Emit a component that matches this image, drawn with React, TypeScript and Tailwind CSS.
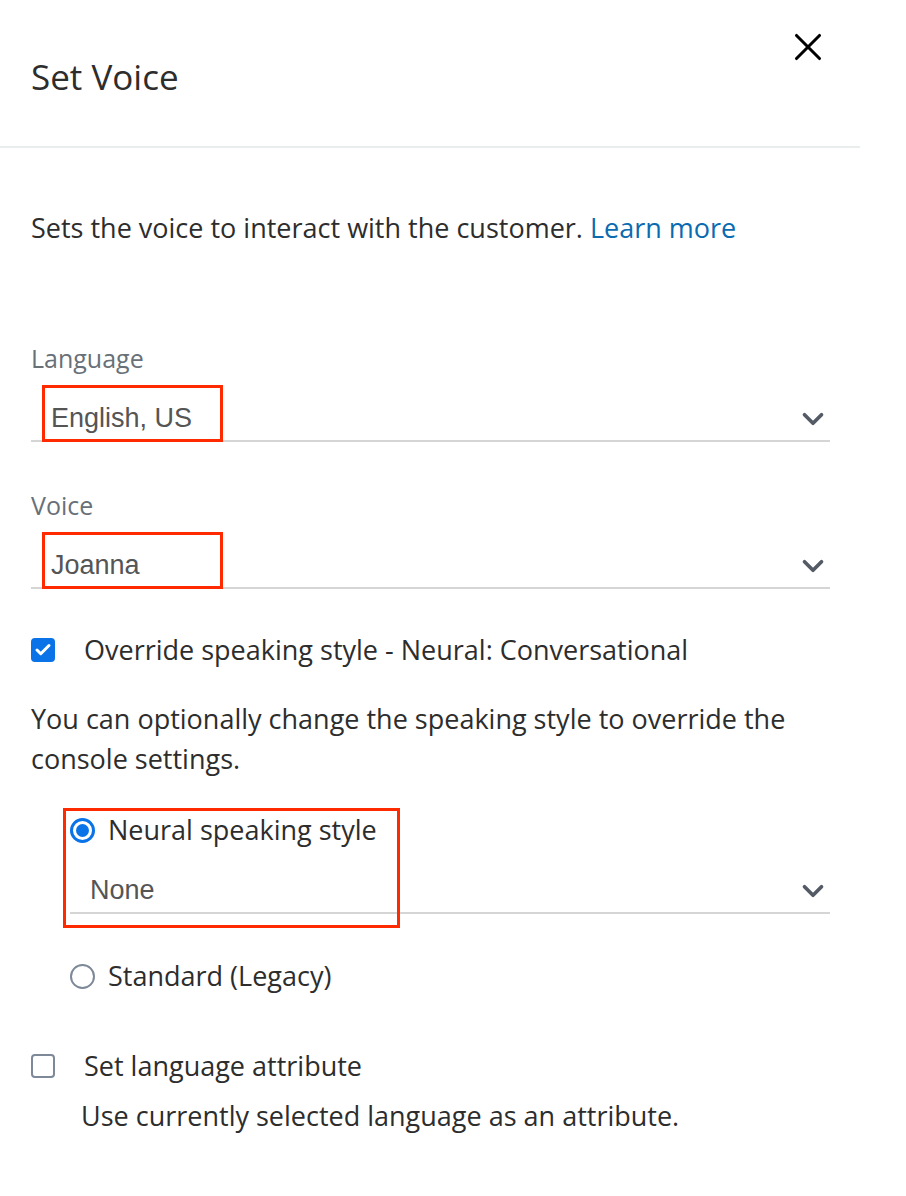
import { ChevronDown, X, Check } from "lucide-react";

const ui = "font-['Open_Sans',_'Noto_Sans',_sans-serif]";
const sel = "font-['Liberation_Sans',_Arial,_sans-serif]";

function SelectRow({ value, tall, boxed }: { value: string; tall?: boolean; boxed?: boolean }) {
  return (
    <div
      className={`relative flex items-end justify-between border-b-2 border-[#d5d5d5] pb-[4px] pl-[20px] ${
        tall ? "h-[68px]" : "h-[66px]"
      }`}
    >
      <span className={`${sel} text-[27px] leading-[36px] text-[#555555]`}>{value}</span>
      <ChevronDown className="h-[34px] w-[34px] text-[#545b64]" strokeWidth={2.6} />
      {boxed && (
        <div className="pointer-events-none absolute left-[11px] top-[11px] h-[57px] w-[181px] border-[3px] border-[#ff2a00]" />
      )}
    </div>
  );
}

export default function App() {
  return (
    <div className={`${ui} h-[1196px] w-[906px] bg-white text-[#2d2d2d]`}>
      <header className="flex h-[148px] w-[860px] items-start justify-between border-b-2 border-[#eaeded] pl-[31px] pr-[29px]">
        <h1 className="mt-[55px] text-[35px] leading-[44px]">Set Voice</h1>
        <button className="mt-[24px]">
          <X className="h-[46px] w-[46px] text-black" strokeWidth={1.6} />
        </button>
      </header>

      <div className="w-[830px] pl-[31px]">
        <p className="mt-[62px] text-[27px] leading-[36px]">
          Sets the voice to interact with the customer.{" "}
          <a className="text-[#0a6bb0]">Learn more</a>
        </p>

        <div className="mt-[96px]">
          <label className="block text-[25px] leading-[32px] text-[#687078]">Language</label>
          <SelectRow value="English, US" tall boxed />
        </div>

        <div className="mt-[47px]">
          <label className="block text-[25px] leading-[32px] text-[#687078]">Voice</label>
          <SelectRow value="Joanna" tall boxed />
        </div>

        <div className="mt-[43px] flex items-center">
          <span className="flex h-[24px] w-[24px] items-center justify-center rounded-[4px] bg-[#0a73e8]">
            <Check className="h-[18px] w-[18px] text-white" strokeWidth={4} />
          </span>
          <span className="ml-[29px] text-[27px] leading-[36px]">
            Override speaking style - Neural: Conversational
          </span>
        </div>

        <p className="mt-[31px] w-[780px] text-[27px] leading-[40px]">
          You can optionally change the speaking style to override the console settings.
        </p>

        <div className="relative mt-[33px] pl-[39px]">
          <div className="flex items-center">
            <span className="flex h-[25px] w-[25px] items-center justify-center rounded-full border-[3px] border-[#0a73e8]">
              <span className="h-[13px] w-[13px] rounded-full bg-[#0a73e8]" />
            </span>
            <span className="ml-[13px] text-[27px] leading-[36px]">Neural speaking style</span>
          </div>
          <SelectRow value="None" />
          <div className="pointer-events-none absolute left-[32px] top-[-4px] h-[120px] w-[337px] border-[3px] border-[#ff2a00]" />
        </div>

        <div className="mt-[44px] flex items-center pl-[39px]">
          <span className="h-[25px] w-[25px] rounded-full border-2 border-[#7d8998]" />
          <span className="ml-[13px] text-[27px] leading-[36px]">Standard (Legacy)</span>
        </div>

        <div className="mt-[54px] flex items-center">
          <span className="h-[24px] w-[24px] rounded-[4px] border-2 border-[#7d8998]" />
          <span className="ml-[29px] text-[27px] leading-[36px]">Set language attribute</span>
        </div>
        <p className="mt-[14px] pl-[50px] text-[27px] leading-[36px]">
          Use currently selected language as an attribute.
        </p>
      </div>
    </div>
  );
}
